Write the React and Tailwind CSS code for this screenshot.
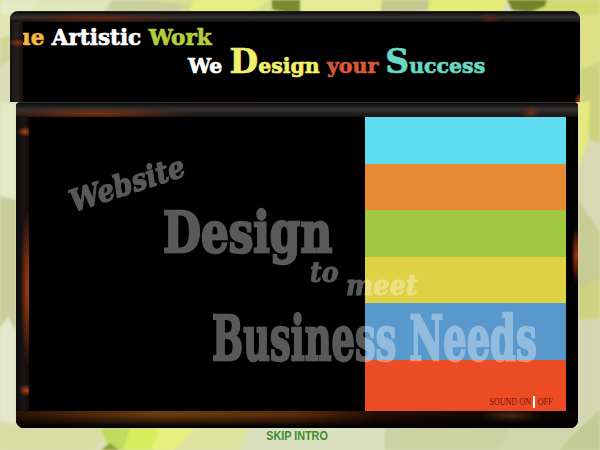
import React from 'react';

// faceted green wallpaper behind the two panels
const Wallpaper = () => (
  <svg className="absolute inset-0 blur-[1px]" width="600" height="450" viewBox="0 0 600 450">
    <rect width="600" height="450" fill="#dcdfb8" />
    {/* top edge */}
    <polygon points="-5,-5 40,-5 30,30 -5,22" fill="#e4ebc4" />
    <polygon points="40,-5 115,-5 100,14 30,14" fill="#e0e7b8" />
    <polygon points="120,-5 310,-5 300,14 170,14 190,6" fill="#d6de8c" />
    <polygon points="115,-5 120,-5 190,6 170,14 105,14" fill="#c9d09c" />
    <polygon points="195,-5 275,-5 250,14 188,14" fill="#e8ef80" />
    <polygon points="272,-5 300,-5 300,14 284,12 272,9" fill="#7b8a30" />
    <polygon points="300,-5 385,-5 380,14 300,14" fill="#e6ec94" />
    <polygon points="383,-5 430,-5 428,10 380,14" fill="#c4c98c" />
    <polygon points="430,-5 510,-5 500,14 428,14" fill="#e6ed74" />
    <polygon points="548,-5 605,-5 605,14 530,14" fill="#d0da6e" />
    <polygon points="505,-5 548,-5 545,6 530,12 512,10" fill="#73842b" />
    {/* left edge */}
    <polygon points="-5,14 12,14 10,35 -5,40" fill="#e0e7b4" />
    <polygon points="-5,40 10,35 10,60 -5,70" fill="#d0d59a" />
    <polygon points="-5,70 10,60 16,102 16,130 -5,105" fill="#dadeb4" />
    <polygon points="-5,105 16,102 16,200 -5,195" fill="#e3e8c6" />
    <polygon points="-5,195 16,200 16,330 8,315 -5,335" fill="#c8cd9c" />
    <polygon points="-5,335 8,318 16,332 16,425 -5,420" fill="#e3e8cc" />
    <polygon points="-5,420 30,428 110,428 90,455 -5,455" fill="#d8dea4" />
    {/* bottom edge */}
    <polygon points="100,428 130,428 122,455 112,455" fill="#c3da60" />
    <polygon points="130,428 160,428 150,455 122,455" fill="#d6ee5e" />
    <polygon points="110,443 125,455 95,455" fill="#8f9f35" />
    <polygon points="160,428 195,428 170,455 150,455" fill="#e7f07c" />
    <polygon points="195,428 250,428 240,455 170,455" fill="#dce4a0" />
    <polygon points="250,428 385,428 385,455 240,455" fill="#dbe0c0" />
    <polygon points="385,428 510,428 495,455 385,455" fill="#cbd3a4" />
    <polygon points="510,428 580,428 555,455 495,455" fill="#cfd6aa" />
    <polygon points="580,428 605,405 605,455 555,455" fill="#c2ca96" />
    {/* right edge */}
    <polygon points="580,14 605,14 605,60 580,70" fill="#dcdf84" />
    <polygon points="580,70 605,60 605,145 590,140 580,102" fill="#cfd27c" />
    <polygon points="578,102 590,102 588,140 578,170" fill="#e6e880" />
    <polygon points="578,170 590,140 605,145 605,240 578,200" fill="#d6d9b2" />
    <polygon points="578,220 605,280 605,320 578,320" fill="#cfd282" />
    <polygon points="578,200 605,240 605,275 578,290" fill="#c8cc94" />
    <polygon points="578,320 605,318 605,405 580,428 578,428" fill="#d3d7b2" />
  </svg>
);

const App = () => {
  return (
    <div className="relative w-[600px] h-[450px] overflow-hidden bg-[#dcdfb8] font-['Liberation_Sans',sans-serif]">
      <Wallpaper />

      <div className="relative flex flex-col pt-[11px]">
        {/* ticker panel */}
        <div className="ml-[10px] w-[570px] h-[91px] rounded-t-lg bg-black flex flex-col overflow-hidden border-t border-[#222]">
          <div className="h-[10px] shrink-0 bg-[radial-gradient(ellipse_12px_5px_at_480px_60%,#5a2412,transparent),radial-gradient(ellipse_90px_5px_at_90px_60%,#5e2410,transparent),linear-gradient(#0c0c0c,#33302f_50%,#100e0d)]" />
          <div className="flex-1 flex min-h-0">
            <div className="w-[13px] shrink-0 bg-[radial-gradient(ellipse_10px_4px_at_60%_26%,#8f3512,transparent),linear-gradient(90deg,#121212,#262221_55%,#1a0b06)]" />
            <div className="relative flex-1 overflow-hidden font-['DejaVu_Serif',serif] font-bold bg-[radial-gradient(ellipse_6px_8px_at_100%_98%,#a83c14,transparent)]">
              <div className="absolute -left-[8px] top-[3px] text-[21.5px] leading-[26px] whitespace-nowrap [-webkit-text-stroke:0.7px_currentColor]">
                <span className="text-[#f4b740]">ue</span>
                <span className="text-white"> Artistic </span>
                <span className="text-[#b5cc3f]">Work</span>
              </div>
              <div className="absolute left-[165px] top-[20px] flex items-baseline whitespace-nowrap text-[20.5px] leading-[40px] [-webkit-text-stroke:0.7px_currentColor]">
                <span className="text-white">We&nbsp;</span>
                <span className="text-[#f2f06a]"><span className="text-[33px]">D</span>esign&nbsp;</span>
                <span className="text-[#d9573a]">your&nbsp;</span>
                <span className="text-[#66d8c4]"><span className="text-[33px]">S</span>uccess</span>
              </div>
            </div>
          </div>
        </div>

        {/* main stage */}
        <div className="ml-[16px] w-[562px] h-[326px] rounded-t rounded-b-lg bg-black flex flex-col overflow-hidden border-t border-[#333]">
          <div className="h-[14px] shrink-0 bg-[radial-gradient(ellipse_10px_7px_at_515px_70%,#6a2a14,transparent),radial-gradient(ellipse_95px_6px_at_80px_75%,#7a2e12,transparent),linear-gradient(#0a0a0a,#35312f_45%,#141110)]" />
          <div className="relative flex-1 flex min-h-0">
            <div className="w-[13px] shrink-0 bg-[radial-gradient(ellipse_8px_5px_at_70%_5%,#b8420f,transparent),radial-gradient(ellipse_7px_80px_at_90%_58%,#b03c12,transparent),radial-gradient(ellipse_8px_6px_at_80%_93%,#b8420f,transparent),linear-gradient(90deg,#0c0c0c,#191514_60%,#140805)]" />
            <div className="flex-1 flex justify-end bg-black">
              <div className="w-[201px] flex flex-col">
                <div className="h-[47px] bg-[#5fdcef]" />
                <div className="h-[46px] bg-[#e68a34]" />
                <div className="h-[47px] bg-[#a1c83f]" />
                <div className="h-[46px] bg-[#e0d043]" />
                <div className="h-[57px] bg-[#5898cc]" />
                <div className="relative flex-1 bg-[#ec4c23]">
                  <div className="absolute right-[11px] bottom-[3px] flex items-center text-[9.5px] leading-[13px] text-[#6e1a0a] font-['Liberation_Serif',serif]">
                    <span className="origin-right scale-x-[0.85] scale-y-[1.2] translate-x-[1px]">SOUND ON</span>
                    <span className="mx-[3px] w-[2px] h-[12px] bg-white" />
                    <span className="origin-left scale-x-[0.85] scale-y-[1.2]">OFF</span>
                  </div>
                </div>
              </div>
            </div>
            <div className="w-[12px] shrink-0 bg-[radial-gradient(ellipse_5px_30px_at_85%_47%,#a8360f,transparent),linear-gradient(#000,#000)]" />

            {/* slogan laid over the stage */}
            <div className="absolute inset-0 opacity-35 font-['DejaVu_Serif',serif] font-bold text-white whitespace-nowrap pointer-events-none">
              <span className="absolute left-[45px] top-[49px] text-[30px] leading-[36px] italic -rotate-[18deg] origin-center scale-x-90 [-webkit-text-stroke:1.2px_white]">Website</span>
              <span className="absolute left-[147px] top-[82px] text-[56px] leading-[66px] origin-left scale-x-[0.78] [-webkit-text-stroke:2.5px_white]">Design</span>
              <span className="absolute left-[294px] top-[139px] text-[28px] leading-[34px] italic origin-left scale-x-90 [-webkit-text-stroke:1px_white]">to</span>
              <span className="absolute left-[330px] top-[153px] text-[27px] leading-[32px] italic origin-left scale-x-[0.95] [-webkit-text-stroke:1px_white]">meet</span>
              <span className="absolute left-[196px] top-[184px] text-[62px] leading-[76px] origin-left scale-x-[0.595] [-webkit-text-stroke:2.5px_white]">Business Needs</span>
            </div>
          </div>
          <div className="h-[17px] shrink-0 bg-[linear-gradient(transparent_25%,#000_95%),radial-gradient(ellipse_30px_8px_at_495px_30%,#4a2a10,transparent),linear-gradient(90deg,#2a1206,#6b3a0e_25%,#5a2a0a_50%,#200c04_65%,#080302)]" />
        </div>

        {/* skip link */}
        <div className="text-center mt-[1px] -translate-x-[3px] text-[12px] leading-[14px] font-bold text-[#3e8e2c] scale-x-90">SKIP INTRO</div>
      </div>
    </div>
  );
};

export default App;
